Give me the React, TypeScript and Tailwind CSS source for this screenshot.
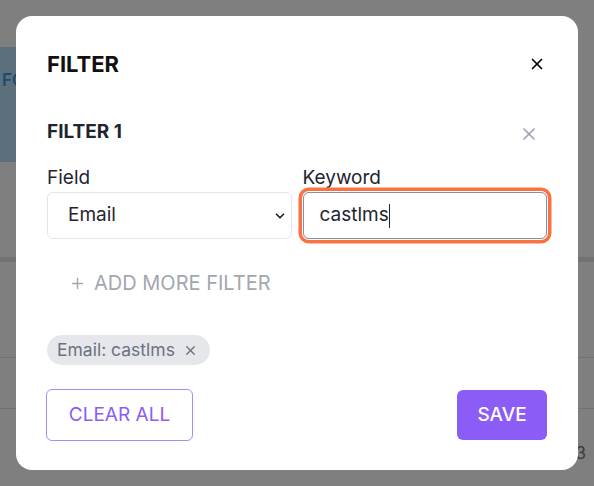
import { ChevronDown, Plus, X } from "lucide-react";

const font = { fontFamily: "Inter, 'Noto Sans', sans-serif" };

export default function App() {
  return (
    <div className="relative h-[486px] w-[594px] overflow-hidden bg-[#7f7f7f]" style={font}>
      {/* page behind the overlay */}
      <div className="flex flex-col">
        <div className="h-[47px]" />
        <div className="flex h-[115px] w-[40px] items-start bg-[#5b707b] pt-[21px] pl-[2px] text-[17px] font-semibold text-[#1d4a70]">
          FC
        </div>
        <div className="h-[95px]" />
        <div className="h-[5px] bg-[#727272]" />
        <div className="h-[95px]" />
        <div className="h-px bg-[#727272]" />
        <div className="h-[50px]" />
        <div className="h-px bg-[#727272]" />
        <div className="flex justify-end pt-[32px] pr-[8px] text-[17px] text-[#3b3b3b]">3</div>
      </div>

      {/* modal */}
      <div className="absolute left-[16px] top-[16px] flex h-[454px] w-[562px] flex-col rounded-2xl bg-white px-[31px] pt-[34px]">
        <div className="flex h-[28px] items-center justify-between">
          <h2 className="text-[22px] font-bold leading-[28px] text-[#111111]">FILTER</h2>
          <X className="mr-[1px] h-[18px] w-[18px] text-black" strokeWidth={2.2} />
        </div>

        <div className="mt-[42px] flex h-[24px] items-center justify-between">
          <h3 className="text-[19px] font-bold leading-[24px] text-[#1f2530]">FILTER 1</h3>
          <X className="mr-[8px] mt-[3px] h-[20px] w-[20px] text-[#9ca3af]" strokeWidth={2} />
        </div>

        <div className="mt-[21px] grid grid-cols-2 gap-[11px]">
          <div className="flex flex-col">
            <label className="h-[26px] text-[19px] leading-[26px] text-[#1f2530]">Field</label>
            <div className="mt-[1px] flex h-[47px] items-center justify-between rounded-md border border-[#e3e5e8] pl-[20px] pr-[4px]">
              <span className="text-[19px] text-[#1f2530]">Email</span>
              <ChevronDown className="h-[14px] w-[14px] text-[#1f2530]" strokeWidth={3} />
            </div>
          </div>
          <div className="flex flex-col">
            <label className="h-[26px] text-[19px] leading-[26px] text-[#1f2530]">Keyword</label>
            <div className="mt-[1px] flex h-[47px] items-center rounded-md border border-[#8a8f98] pl-[16px] ring-[3.5px] ring-[#fb7242] ring-offset-[1px]">
              <span className="text-[19px] text-[#1f2530]">castlms</span>
              <span className="h-[24px] w-px bg-[#1f2530]" />
            </div>
          </div>
        </div>

        <button className="mt-[31px] flex h-[26px] items-center gap-[8px] self-start pl-[22px] text-[20px] text-[#a3a7b0]">
          <Plus className="h-[17px] w-[17px]" strokeWidth={2} />
          ADD MORE FILTER
        </button>

        <div className="mt-[39px] flex h-[30px] items-center gap-[8px] self-start rounded-full bg-[#e5e7eb] pl-[10px] pr-[12px] text-[17.5px] text-[#6b7280]">
          Email: castlms
          <X className="h-[15px] w-[15px]" strokeWidth={2.2} />
        </div>

        <div className="mt-[24px] flex items-center justify-between">
          <button className="-ml-px flex h-[52px] w-[147px] items-center justify-center rounded-md border border-[#a78bfa] text-[19px] text-[#8b5cf6]">
            CLEAR ALL
          </button>
          <button className="flex h-[50px] w-[90px] items-center justify-center rounded-md bg-[#8b5cf6] text-[19px] font-medium text-white">
            SAVE
          </button>
        </div>
      </div>
    </div>
  );
}
